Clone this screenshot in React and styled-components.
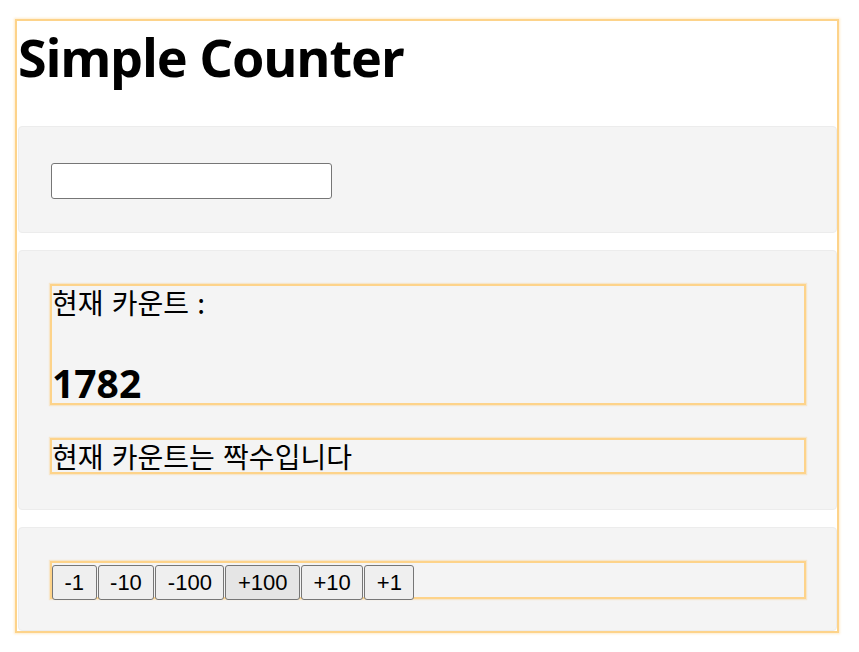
import React, { useState } from 'react';
import styled, { createGlobalStyle } from 'styled-components';

const GlobalStyle = createGlobalStyle`
  body {
    margin: 0;
    background: #ffffff;
    font-family: "Noto Sans", "Noto Sans CJK KR", sans-serif;
    color: #000;
  }
`;

// Outer orange frame
const Frame = styled.div`
  margin: 19px 20px 19px 15px;
  border: 2px solid #fdd38a;
  box-shadow: 0 0 2px 1px rgba(253, 200, 110, 0.35);
`;

const Header = styled.div`
  height: 105px;
  padding-left: 1px;
`;

const Title = styled.h1`
  margin: 0;
  font-family: "Noto Sans", sans-serif;
  font-size: 52px;
  font-weight: 700;
  letter-spacing: -0.9px;
`;

// Grey panel
const Section = styled.section`
  margin: ${p => (p.$gap ? '17px' : '0')} 0 0 1px;
  padding: ${p => p.$pad};
  background: #f4f4f4;
  border: 1px solid #ececec;
  border-radius: 4px;
`;

const CountInput = styled.input`
  display: block;
  box-sizing: border-box;
  width: 281px;
  height: 36px;
  margin: 0 0 0 1px;
  border: 1px solid #767676;
  border-radius: 3px;
  background: #fff;
  font-size: 20px;
`;

// Orange outlined box inside a panel
const Box = styled.div`
  box-sizing: border-box;
  border: 2px solid #fdd38a;
  box-shadow: 0 0 1px 1px rgba(253, 200, 110, 0.3);
  margin-top: ${p => p.$top || '0'};
  height: ${p => p.$height || 'auto'};
`;

const Label = styled.div`
  font-family: "Noto Sans CJK KR", "Noto Sans", sans-serif;
  font-size: 28px;
  line-height: 33px;
  word-spacing: 2px;
  white-space: nowrap;
`;

const Count = styled.div`
  margin-top: 44px;
  font-size: 39px;
  line-height: 40px;
  font-weight: 700;
`;

const ButtonRow = styled(Box)`
  display: flex;
  align-items: flex-start;
  gap: 1px;
  padding-top: 2px;
`;

const StepButton = styled.button`
  box-sizing: border-box;
  height: 35px;
  padding: 0 11.5px;
  border: 1px solid #767676;
  border-radius: 3px;
  background: ${p => (p.$hover ? '#e5e5e5' : '#efefef')};
  font-family: "Liberation Sans", Arial, sans-serif;
  font-size: 22px;
  color: #000;
  cursor: pointer;
`;

const steps = [-1, -10, -100, 100, 10, 1];

export default function App() {
  const [count, setCount] = useState(1782);
  const [value, setValue] = useState('');

  return (
    <>
      <GlobalStyle />
      <Frame>
        <Header>
          <Title>Simple Counter</Title>
        </Header>

        <Section $pad="36px 30px 33px 31px">
          <CountInput value={value} onChange={e => setValue(e.target.value)} />
        </Section>

        <Section $gap $pad="33px 30px 35px 31px">
          <Box $height="121px">
            <Label>현재 카운트 :</Label>
            <Count>{count}</Count>
          </Box>
          <Box $top="33px" $height="36px">
            <Label>현재 카운트는 {count % 2 === 0 ? '짝수' : '홀수'}입니다</Label>
          </Box>
        </Section>

        <Section $gap $pad="33px 30px 31px 31px">
          <ButtonRow $height="38px">
            {steps.map(s => (
              <StepButton key={s} $hover={s === 100} onClick={() => setCount(count + s)}>
                {s > 0 ? `+${s}` : s}
              </StepButton>
            ))}
          </ButtonRow>
        </Section>
      </Frame>
    </>
  );
}
